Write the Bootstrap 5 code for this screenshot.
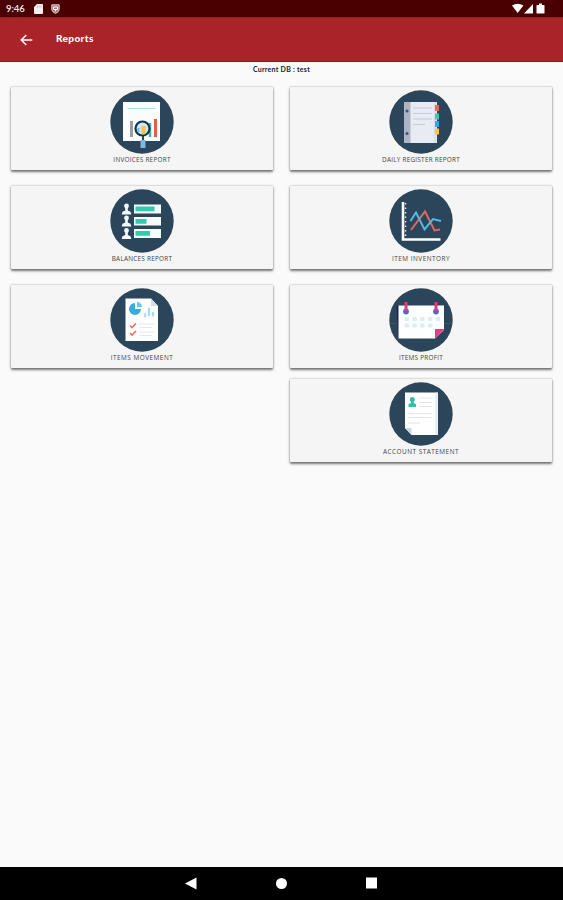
<!DOCTYPE html>
<html lang="en">
<head>
<meta charset="utf-8">
<meta name="viewport" content="width=device-width, initial-scale=1">
<title>Reports</title>
<link href="https://cdn.jsdelivr.net/npm/bootstrap@5.3.0/dist/css/bootstrap.min.css" rel="stylesheet">
<style>
body{background:#fafafa;font-family:"Open Sans",sans-serif;color:#333;overflow:hidden}
svg{display:block;flex:none}
.status-bar{height:17px;background:#4a0001;color:#eee;font:600 9.5px/17px "Lato",sans-serif;padding:0 18px 0 6px}
.status-bar .clock{width:20px;letter-spacing:-.1px}
.app-bar{height:45px;background:#a92328;border-bottom:1px solid #a50d12;border-top:1px solid #971f23;padding-left:20px}
.app-bar h1{font:900 10px/14px "Lato",sans-serif;letter-spacing:.4px;margin:-3px 0 0 23px;color:#fff}
.db-name{height:25px;padding-top:1px;font:700 7px/12px "Lato",sans-serif;color:#222;letter-spacing:.26px}
.tiles{padding:0 11px;gap:17px}
.tile-col{width:262px;gap:16px}
.tile{height:83px;background:#f5f5f5;border:0;border-radius:1px;box-shadow:0 1.5px 2.5px rgba(0,0,0,.52),0 0 2px rgba(0,0,0,.24);padding-top:3px;color:#444}
.tile.last-tile{margin-top:-5.5px}
.tile span{font-size:6.4px;line-height:8px;margin-top:2px;letter-spacing:.24px;white-space:nowrap}
.tile .wide-label{letter-spacing:.5px}
.nav-keys{height:33px;background:#000;padding:0 0 1px 185px;gap:78px}
.shield-icon{margin-left:8px}
</style>
<script src="https://cdn.jsdelivr.net/npm/bootstrap@5.3.0/dist/js/bootstrap.bundle.min.js"></script>
</head>
<body class="vh-100 d-flex flex-column">
<header>
<div class="status-bar d-flex align-items-center">
<span class="clock">9:46</span>
<svg class="ms-2" width="9" height="10" viewBox="0 0 9 10"><path d="M3 0h5q1 0 1 1v8q0 1-1 1H1q-1 0-1-1V3z" fill="#f5eeee"/><path d="M3.5 1.5v2M5.2 1.5v2M7 1.5v2" stroke="#b99" stroke-width=".6"/></svg>
<svg class="shield-icon" width="9" height="10" viewBox="0 0 9 10"><path d="M.8.8h7.4v4.8Q8 8 4.5 9.5 1 8 .8 5.600z" fill="#a77" stroke="#ddcaca"/><path d="M2.500 3h4v2.500h-4zM4.500 5.500v2" fill="none" stroke="#fff"/></svg>
<svg class="ms-auto" width="33" height="11" viewBox="0 0 33 11"><path d="M0 2.500Q5.700-1 11.400 2.500L5.700 10zM12 10.500 21 1v9.500zM25 2h2V.5h3V2h2q.5 0 .5.5v7.500q0 .5-.5.5h-7q-.5 0-.5-.5V2.500q0-.5.5-.5z" fill="#fff"/></svg>
</div>
<div class="app-bar d-flex align-items-center">
<svg width="13" height="12" viewBox="0 0 13 12"><path d="M12.300 6H1.200M6.300.9 1.200 6l5.100 5.100" fill="none" stroke="#fff" stroke-width="1.450"/></svg>
<h1>Reports</h1>
</div>
</header>
<main class="flex-grow-1">
<div class="db-name text-center">Current DB : test</div>
<div class="tiles d-flex align-items-start">
<div class="tile-col d-flex flex-column">
<div class="tile card align-items-center">
<svg width="64" height="64" viewBox="0 0 64 64"><circle cx="32" cy="32" r="31.700" fill="#2b465a"/><path d="M13 12h37v39H13z" fill="#fafcfd"/><path d="M17.500 18.500h28" stroke="#a4e3dc"/><path d="M21.500 31v16" stroke="#999fa5" stroke-width="3"/><path d="M45.500 29v18" stroke="#e85b45" stroke-width="3"/><path d="M40 33v14" stroke="#35bfa7" stroke-width="2.500"/><circle cx="32.500" cy="38.500" r="7" fill="#cceaf5" stroke="#183349" stroke-width="2.200"/><path d="M33.500 36v8.300" stroke="#ffc04e" stroke-width="4"/><path d="M28.500 38v4" stroke="#65b8df" stroke-width="2"/><path d="M33 46v5" stroke="#29445a" stroke-width="2"/><path d="M33 50v8" stroke="#80b7e3" stroke-width="5"/></svg>
<span>INVOICES REPORT</span>
</div>
<div class="tile card align-items-center">
<svg width="64" height="64" viewBox="0 0 64 64"><circle cx="32" cy="32" r="31.700" fill="#2b465a"/><defs><g id="person"><circle cx="16.500" cy="17" r="2.400"/><path d="M15.200 18.500h2.600V21.500l2.700 1.300.8 2.700h-9.600l.8-2.700 2.700-1.300z"/></g></defs><g fill="#f5fafb"><use href="#person"/><use href="#person" y="12"/><use href="#person" y="24.500"/><path d="M24 15.500h27v9H24zM24 28h27v8.500H24zM24 40h27v9H24z"/></g><path d="M25.500 17.500h19v4.800h-19zM25.500 30h11v4.700h-11zM25.500 42h14.500v4.700H25.500z" fill="#36c9b0"/></svg>
<span>BALANCES REPORT</span>
</div>
<div class="tile card align-items-center">
<svg width="64" height="64" viewBox="0 0 64 64"><circle cx="32" cy="32" r="31.700" fill="#2b465a"/><path d="M15.500 10.500H41l7 7.500v35H15.500z" fill="#fff"/><path d="M41 10.500V18h7z" fill="#cfdfe8"/><path d="M25 15a6 6 0 1 0 6 6h-6z" fill="#36acdf"/><path d="M27 14v5h5a5 5 0 0 0-5-5" fill="#65c8ee"/><path d="M35 25v4M39 20v8M43 24v4.500" stroke="#a9d8f1" stroke-width="2.300"/><path d="m33.500 27 3-3.500" stroke="#dceff7"/><path d="m20 37.500 2 2 4-4M20 45l2 2 4-4" fill="none" stroke="#f16c61" stroke-width="1.600"/><path d="M29.500 36H44M29.500 39.500H42M29.500 44H44M29.500 47.500H42" stroke="#dfe6ea" stroke-width=".9"/></svg>
<span class="wide-label">ITEMS MOVEMENT</span>
</div>
</div>
<div class="tile-col d-flex flex-column">
<div class="tile card align-items-center">
<svg width="64" height="64" viewBox="0 0 64 64"><circle cx="32" cy="32" r="31.700" fill="#2b465a"/><path d="M15 12h33v41H15z" fill="#e8ebf3"/><path d="M15 12h6.500v41H15z" fill="#aeb4c3"/><path d="M46 12v41" stroke="#d8dfea" stroke-width="2"/><path d="M24 18h19M24 23.500h19M24 29h19M24 34.500h12" stroke="#c6cbd9"/><circle cx="18" cy="21" r="1.500" fill="#40516a"/><circle cx="18" cy="43.500" r="1.500" fill="#40516a"/><path d="M46 15h4v6h-4z" fill="#e86d57"/><path d="M46 23.500h4v6h-4z" fill="#42c7ac"/><path d="M46 31h4v6h-4z" fill="#3ca5df"/><path d="M46 38.500h4v6h-4z" fill="#fac44b"/></svg>
<span>DAILY REGISTER REPORT</span>
</div>
<div class="tile card align-items-center">
<svg width="64" height="64" viewBox="0 0 64 64"><circle cx="32" cy="32" r="31.700" fill="#2b465a"/><path d="M14 13v37.500h37.500" fill="none" stroke="#fff" stroke-width="2.600"/><path d="M16.500 14v34" stroke="#e2ebef" stroke-width="1.500" stroke-dasharray="1.500 3"/><path d="m22 41 14-18.500 9.500 19 5.500-1" fill="none" stroke="#dd6762" stroke-width="2"/><path d="m21.500 32 5.500-8.500 8.500 17L44 30l8 2" fill="none" stroke="#54b9e1" stroke-width="2"/></svg>
<span class="wide-label">ITEM INVENTORY</span>
</div>
<div class="tile card align-items-center">
<svg width="64" height="64" viewBox="0 0 64 64"><circle cx="32" cy="32" r="31.700" fill="#2b465a"/><path d="M0 35.500h64" stroke="#496477" stroke-width=".5"/><path d="M7.500 17.500h5V50H9z" fill="#20205e"/><path d="M9.500 17.500h45.500V42l-9 8.500H9.500z" fill="#fff"/><path d="M46 50.500V41h9z" fill="#df3e83"/><path d="M55 41v1l-9 8.500z" fill="#b73378"/><path d="M15.500 31h37M15.500 37.500h31" stroke="#dceef5" stroke-width="4" stroke-dasharray="4.500 3.300"/><g fill="#4768d7"><circle cx="17" cy="23.500" r="2.900"/><circle cx="47" cy="23.500" r="2.900"/></g><path d="M17 14v9M47 14v9" stroke="#e13d7e" stroke-width="3"/></svg>
<span>ITEMS PROFIT</span>
</div>
<div class="tile last-tile card align-items-center">
<svg width="64" height="64" viewBox="0 0 64 64"><circle cx="32" cy="32" r="31.700" fill="#2b465a"/><path d="M16 10.500h33V53H22.500L16 46z" fill="#fff"/><path d="M47.500 10.500V53" stroke="#e2e9ef" stroke-width="2"/><path d="M16 46h6.500v7z" fill="#cad5dd"/><g fill="#32bfa6"><circle cx="23.300" cy="17.500" r="2.500"/><path d="M22 19h2.700v2l2.300 1v3h-7.500v-3l2.500-1z"/></g><path d="M30 16h13M30 20.500h13M30 24.500h13M19 31.500h24M19 35.500h24M19 41h12" stroke="#dce2e7" stroke-width=".9"/></svg>
<span class="wide-label">ACCOUNT STATEMENT</span>
</div>
</div>
</div>
</main>
<footer class="nav-keys d-flex align-items-center">
<svg width="12" height="13" viewBox="0 0 12 13"><path d="M0 6.500 11.500.5v12z" fill="#fff"/></svg>
<svg width="13" height="13" viewBox="0 0 13 13"><circle cx="6.500" cy="6.500" r="5.500" fill="#fff"/></svg>
<svg width="12" height="12" viewBox="0 0 12 12"><path d="M0 .5h11v11H0z" fill="#fff"/></svg>
</footer>
</body>
</html>
